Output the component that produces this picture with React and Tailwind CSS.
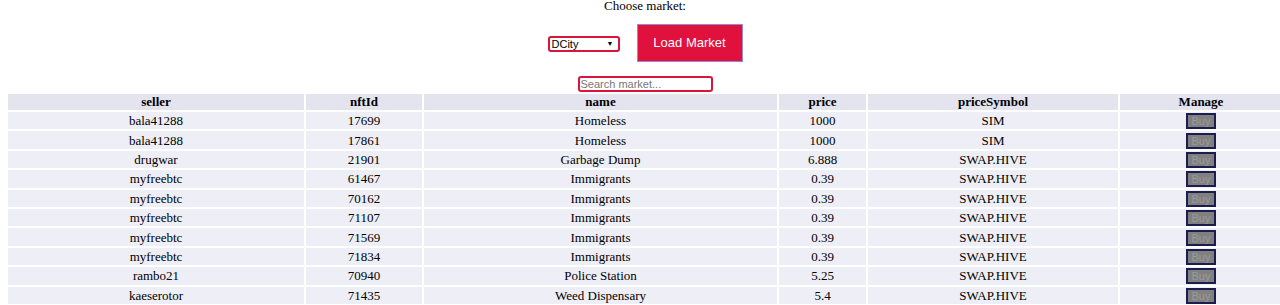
import React, { useState } from 'react';

const rows = [
    ['bala41288', '17699', 'Homeless', '1000', 'SIM'],
    ['bala41288', '17861', 'Homeless', '1000', 'SIM'],
    ['drugwar', '21901', 'Garbage Dump', '6.888', 'SWAP.HIVE'],
    ['myfreebtc', '61467', 'Immigrants', '0.39', 'SWAP.HIVE'],
    ['myfreebtc', '70162', 'Immigrants', '0.39', 'SWAP.HIVE'],
    ['myfreebtc', '71107', 'Immigrants', '0.39', 'SWAP.HIVE'],
    ['myfreebtc', '71569', 'Immigrants', '0.39', 'SWAP.HIVE'],
    ['myfreebtc', '71834', 'Immigrants', '0.39', 'SWAP.HIVE'],
    ['rambo21', '70940', 'Police Station', '5.25', 'SWAP.HIVE'],
    ['kaeserotor', '71435', 'Weed Dispensary', '5.4', 'SWAP.HIVE'],
];

const headers = ['seller', 'nftId', 'name', 'price', 'priceSymbol', 'Manage'];

export default function App() {
    const [market, setMarket] = useState('DCity');
    const [search, setSearch] = useState('');
    return (
        <div className="ml-[6px] w-[1278px] text-center text-black font-['Liberation_Serif',serif]">
            <p className="text-[13px] leading-[12px]">Choose market:</p>
            <div className="mt-[12px] flex items-center justify-center gap-[17px]">
                <div className="relative w-[72px] h-[16px] mt-[2px]">
                    <select
                        value={market}
                        onChange={(e) => setMarket(e.target.value)}
                        className="block appearance-none w-full h-full border-2 border-[#dc143c] rounded-[3px] bg-white pl-[2px] text-left text-[11px] leading-[12px] font-['Liberation_Sans',sans-serif] outline-none"
                    >
                        <option>DCity</option>
                    </select>
                    <span className="pointer-events-none absolute right-[6px] inset-y-0 flex items-center text-[7px]">▼</span>
                </div>
                <button
                    type="button"
                    className="w-[106px] h-[38px] bg-[#e0113c] border border-[#9c86d6] text-white text-[13px] font-['Liberation_Sans',sans-serif]"
                >
                    Load Market
                </button>
            </div>
            <div className="mt-[14px] flex justify-center">
                <input
                    value={search}
                    onChange={(e) => setSearch(e.target.value)}
                    placeholder="Search market..."
                    className="block w-[135px] h-[16px] border-2 border-[#dc143c] rounded-[3px] px-[1px] text-[11px] font-['Liberation_Sans',sans-serif] placeholder:text-[#777] outline-none"
                />
            </div>
            <table className="w-full table-fixed border-separate border-spacing-[2px] text-[13px] font-['Liberation_Serif',serif]">
                <colgroup>
                    <col className="w-[296px]" />
                    <col className="w-[116px]" />
                    <col className="w-[353px]" />
                    <col className="w-[87px]" />
                    <col className="w-[250px]" />
                    <col />
                </colgroup>
                <thead>
                    <tr className="h-[16px]">
                        {headers.map((h) => (
                            <th key={h} className="bg-[#e4e4ee] p-0 font-bold leading-[14px]">{h}</th>
                        ))}
                    </tr>
                </thead>
                <tbody>
                    {rows.map((r, i) => (
                        <tr key={i} className="h-[17.4px]">
                            {r.map((c, j) => (
                                <td key={j} className="bg-[#eeeef6] p-0 leading-[15px]">{c}</td>
                            ))}
                            <td className="bg-[#eeeef6] p-0 leading-[15px]">
                                <button
                                    type="button"
                                    disabled
                                    className="w-[30px] h-[16px] align-middle bg-[#808080] border-2 border-[#1c1c4e] text-[#9a9a9a] text-[11px] leading-[12px] font-['Liberation_Sans',sans-serif]"
                                >
                                    Buy
                                </button>
                            </td>
                        </tr>
                    ))}
                </tbody>
            </table>
        </div>
    );
}
